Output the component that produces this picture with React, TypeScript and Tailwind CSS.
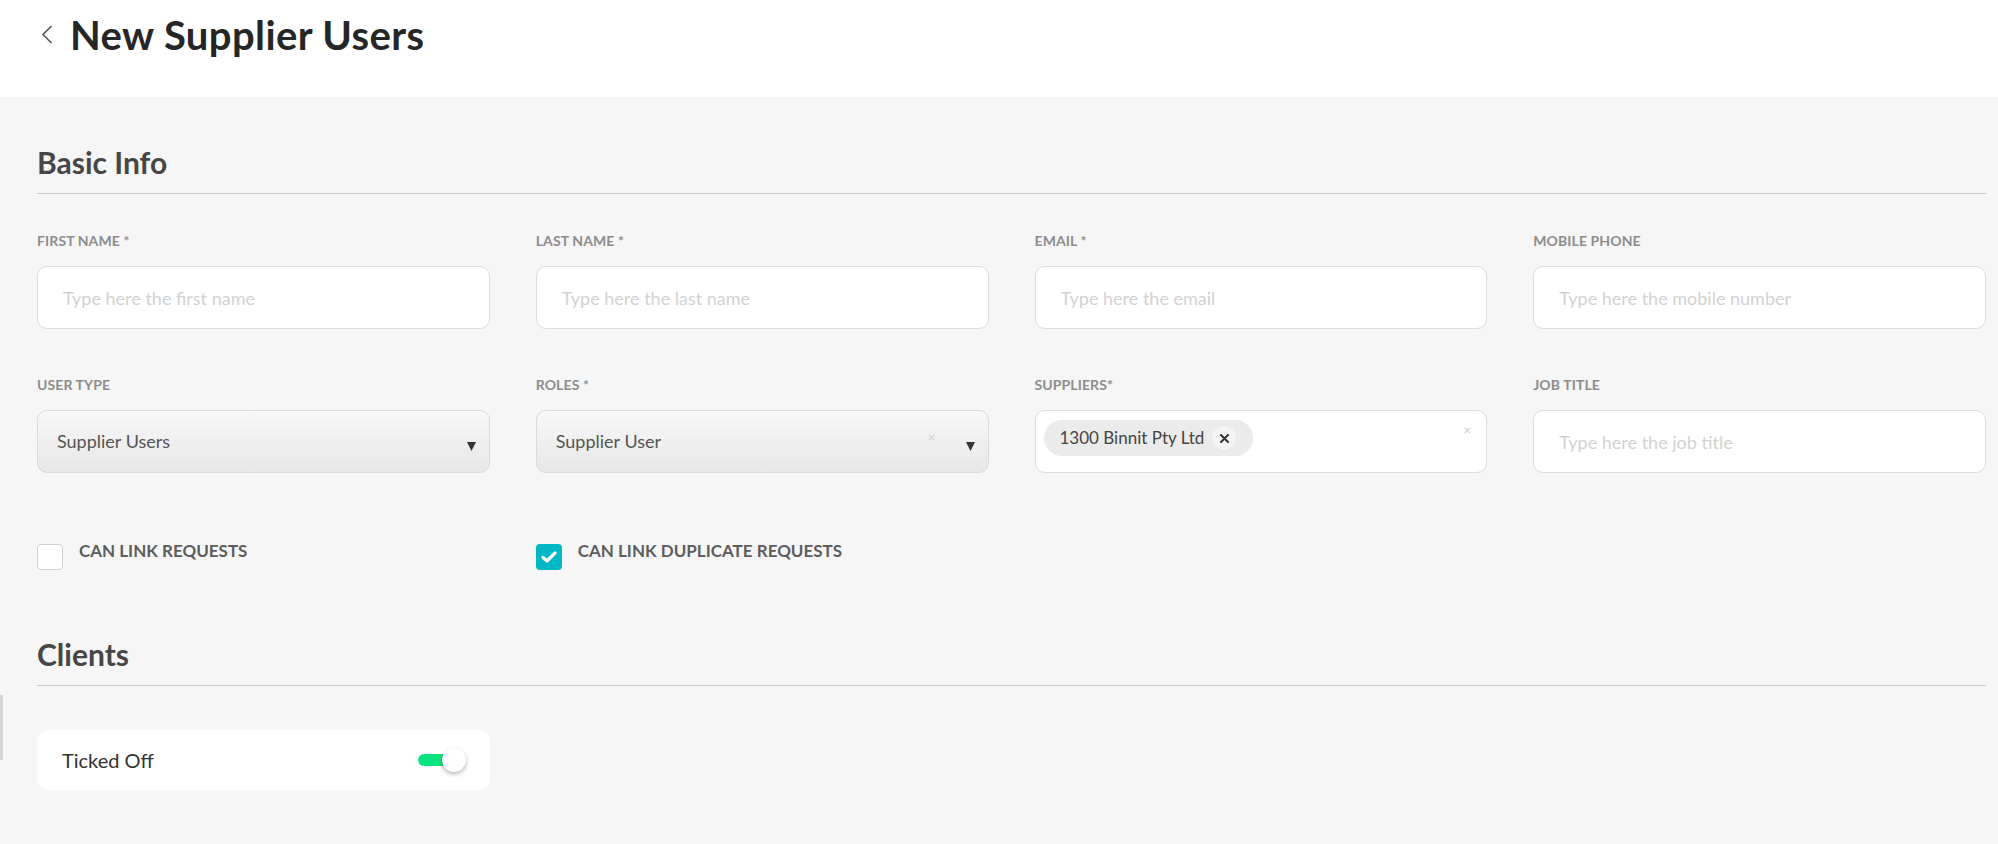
import React from "react";

const font = { fontFamily: "Lato, 'Open Sans', sans-serif" };

function FieldLabel({ children }: { children: React.ReactNode }) {
  return (
    <div className="h-[18px] text-[14px] leading-[18px] font-bold uppercase text-[#8d8d8d] tracking-[0.1px]">
      {children}
    </div>
  );
}

function TextField({ label, placeholder }: { label: string; placeholder: string }) {
  return (
    <div className="flex flex-col gap-[16px]">
      <FieldLabel>{label}</FieldLabel>
      <input
        readOnly
        placeholder={placeholder}
        className="h-[63px] w-full rounded-[10px] border border-[#dcdcdc] bg-white px-[25px] text-[18px] text-[#444] outline-none placeholder:text-[#d2d2d2]"
      />
    </div>
  );
}

function Arrow() {
  return (
    <svg width="9" height="9" viewBox="0 0 9 9" className="absolute right-[13px] top-[31px]">
      <path d="M0 0 L9 0 L4.5 9 Z" fill="#333" />
    </svg>
  );
}

function SelectField({ label, value, clearable }: { label: string; value: string; clearable?: boolean }) {
  return (
    <div className="flex flex-col gap-[16px]">
      <FieldLabel>{label}</FieldLabel>
      <div className="relative flex h-[63px] items-center rounded-[10px] border border-[#dadada] bg-gradient-to-b from-[#f8f8f8] to-[#e7e7e7] pl-[19px] text-[18px] text-[#555]">
        {value}
        {clearable && (
          <span className="absolute right-[52px] top-[19px] text-[14px] leading-none text-[#cfcfcf]">×</span>
        )}
        <Arrow />
      </div>
    </div>
  );
}

function SuppliersField() {
  return (
    <div className="flex flex-col gap-[16px]">
      <FieldLabel>Suppliers*</FieldLabel>
      <div className="relative flex h-[63px] items-start rounded-[10px] border border-[#dcdcdc] bg-white pl-[8px] pt-[9px]">
        <div className="flex h-[36px] items-center gap-[8px] rounded-full bg-[#ebebeb] pl-[16px] pr-[17px] text-[17px] text-[#444]">
          1300 Binnit Pty Ltd
          <span className="flex h-[24px] w-[24px] items-center justify-center rounded-full bg-[#f4f4f4]">
            <svg width="9" height="9" viewBox="0 0 9 9">
              <path d="M1 1 L8 8 M8 1 L1 8" stroke="#333" strokeWidth="2" strokeLinecap="round" />
            </svg>
          </span>
        </div>
        <span className="absolute right-[15px] top-[12px] text-[14px] leading-none text-[#cfcfcf]">×</span>
      </div>
    </div>
  );
}

function Checkbox({ checked, label }: { checked?: boolean; label: string }) {
  return (
    <div className="flex items-start gap-[16px]">
      {checked ? (
        <div className="flex h-[26px] w-[26px] items-center justify-center rounded-[4px] bg-[#00b7c5]">
          <svg width="16" height="12" viewBox="0 0 16 12">
            <path d="M2 6.5 L6 10 L14 2" stroke="white" strokeWidth="3.2" fill="none" strokeLinecap="round" strokeLinejoin="round" />
          </svg>
        </div>
      ) : (
        <div className="h-[26px] w-[26px] rounded-[4px] border border-[#cfcfcf] bg-white" />
      )}
      <span className="mt-[-3px] text-[17px] leading-[20px] font-bold uppercase text-[#5d5d5d]">{label}</span>
    </div>
  );
}

function SectionTitle({ children }: { children: React.ReactNode }) {
  return (
    <div>
      <h2 className="h-[34px] text-[30px] leading-[34px] font-bold text-[#464646]">{children}</h2>
      <div className="mt-[14px] h-px bg-[#c8c8c8]" />
    </div>
  );
}

export default function App() {
  return (
    <div className="relative min-h-[844px] bg-[#f6f6f6]" style={font}>
      <header className="flex h-[97px] items-start bg-white pl-[41px] pt-[12px]">
        <svg width="12" height="19" viewBox="0 0 12 19" className="mt-[13px]">
          <path d="M10.5 1 L2 9.5 L10.5 18" stroke="#555" strokeWidth="1.6" fill="none" />
        </svg>
        <h1 className="ml-[17px] text-[40px] leading-[46px] font-bold tracking-[0.4px] text-[#262626]">New Supplier Users</h1>
      </header>

      <div className="absolute left-0 top-[695px] h-[65px] w-[3px] bg-[#d6d6d6]" />

      <main className="pl-[37px] pr-[12px] pt-[48px]">
        <SectionTitle>Basic Info</SectionTitle>

        <div className="mt-[38px] grid grid-cols-4 gap-x-[46px] gap-y-[47px]">
          <TextField label="First Name *" placeholder="Type here the first name" />
          <TextField label="Last Name *" placeholder="Type here the last name" />
          <TextField label="Email *" placeholder="Type here the email" />
          <TextField label="Mobile Phone" placeholder="Type here the mobile number" />
          <SelectField label="User Type" value="Supplier Users" />
          <SelectField label="Roles *" value="Supplier User" clearable />
          <SuppliersField />
          <TextField label="Job Title" placeholder="Type here the job title" />
        </div>

        <div className="mt-[71px] grid grid-cols-4 gap-x-[46px]">
          <Checkbox label="Can Link Requests" />
          <Checkbox checked label="Can Link Duplicate Requests" />
        </div>

        <div className="mt-[67px]">
          <SectionTitle>Clients</SectionTitle>
        </div>

        <div className="mt-[44px] grid grid-cols-4 gap-x-[46px]">
          <div className="flex h-[60px] items-center justify-between rounded-[12px] bg-white pl-[25px] pr-[24px]">
            <span className="text-[20px] text-[#333]">Ticked Off</span>
            <div className="relative h-[24px] w-[48px]">
              <div className="absolute left-0 top-[6px] h-[12px] w-[36px] rounded-full bg-[#0be37f]" />
              <div className="absolute right-0 top-0 h-[24px] w-[24px] rounded-full bg-white shadow-[0_2px_4px_rgba(0,0,0,0.3)]" />
            </div>
          </div>
        </div>
      </main>
    </div>
  );
}
